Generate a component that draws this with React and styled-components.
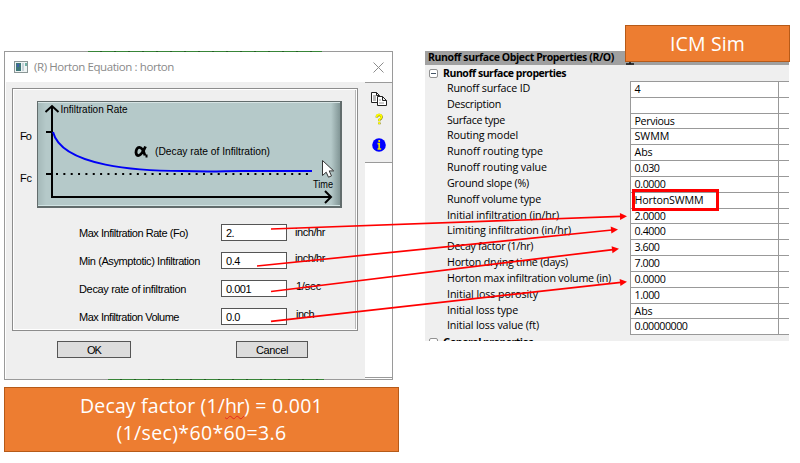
import React, { useLayoutEffect, useRef, useState } from "react";
import styled, { createGlobalStyle } from "styled-components";

const Global = createGlobalStyle`
  * { box-sizing: border-box; }
  body { margin: 0; background: #fff; color: #000; overflow: hidden; }
`;

const Page = styled.main`
  position: relative;
  display: flex;
  align-items: flex-start;
  width: 800px;
  height: 463px;
  padding: 51px 0 0 4px;
  overflow: hidden;
`;
const FitSpan = styled.span`
  display: inline-block;
  width: max-content;
  white-space: pre;
`;

/* Spreads a label's letters so that it fills the given width. */
function Fit({ width, children }) {
  const ref = useRef(null);
  const [spacing, setSpacing] = useState(0);
  useLayoutEffect(() => {
    ref.current.style.letterSpacing = "0px";
    const natural = ref.current.getBoundingClientRect().width;
    const next = (width - natural) / String(children).length;
    ref.current.style.letterSpacing = `${next}px`;
    setSpacing(next);
  }, [width, children]);
  return <FitSpan ref={ref} style={{ letterSpacing: `${spacing}px` }}>{children}</FitSpan>;
}

const LeftColumn = styled.div`
  display: flex;
  flex-direction: column;
  gap: 7px;
  width: 421px;
`;
const Dialog = styled.section`
  position: relative;
  width: 389px;
  height: 329px;
  border: 1px solid #9a9a9a;
  background: #fff;
  font: 11px/14px "Liberation Sans", Arial, sans-serif;
`;
const Trace = styled.i`
  position: absolute;
  left: ${(p) => p.$left}px;
  ${(p) => p.$edge}: -1px;
  width: ${(p) => p.$width}px;
  height: 1px;
  background: repeating-linear-gradient(90deg, #388538 0 12px, #245b24 12px 14px);
`;
const TitleBar = styled.header`
  display: flex;
  align-items: center;
  height: 30px;
  padding: 0 8px 0 9px;
  color: #8a8a8a;
  font: 11.5px/16px "Open Sans", "Noto Sans", sans-serif;
  svg:last-child { margin-left: auto; }
`;
const TitleText = styled.h1`
  margin: 0 0 0 6px;
  font: inherit;
`;
const DialogBody = styled.div`
  display: flex;
  height: 297px;
`;
const DialogMain = styled.div`
  width: 359px;
  margin-left: 1px;
  padding: 6px 0 0 6px;
  background: #efefef;
`;
const ToolRail = styled.aside`
  flex: 1;
  height: 296px;
  border-bottom: 1px solid #9a9a9a;
`;
const Tools = styled.nav`
  display: flex;
  flex-direction: column;
  align-items: center;
  height: 81px;
  padding-top: 9px;
  border: solid #9a9a9a;
  border-width: 1px 0;
  background: #efefef;
`;
const GroupBox = styled.div`
  width: 346px;
  height: 243px;
  padding: 12px 0 0 5px;
  border: 1px solid #8c8c8c;
  box-shadow: inset 1px 1px #fff, inset -1px -1px #fff, inset -2px 0 #b8b8b8;
`;
const ChartRow = styled.div`
  display: flex;
`;
const AxisNames = styled.div`
  display: flex;
  flex-direction: column;
  gap: 28px;
  width: 19px;
  padding: 28px 0 0 2px;
`;
const ChartFrame = styled.div`
  width: 305px;
  height: 107px;
  border: 1px solid #626c6c;
  border-width: 1px 2px 2px 1px;
  background: linear-gradient(90deg, #a5b9b9, #b5c9c9 8px, #b5c9c9 293px, #829696);
  box-shadow: inset 0 1px #d7e4e4, inset 0 -1px #d1e4e4;
  svg { display: block; }
`;
const Fields = styled.div`
  display: grid;
  row-gap: 11px;
  margin: 16px 0 0 61px;
`;
const FieldRow = styled.label`
  display: grid;
  grid-template-columns: 142px 66px 1fr;
  height: 17px;
  align-items: center;
`;
const FieldInput = styled.div`
  height: 17px;
  padding: 1px 0 0 4px;
  border: 1px solid #555;
  background: #fff;
`;
const Unit = styled.span`
  padding-left: ${(p) => p.$inset}px;
  transform: translateY(${(p) => -p.$raise}px);
`;
const Buttons = styled.div`
  display: flex;
  gap: 105px;
  padding: 10px 0 0 45px;
`;
const Button = styled.button`
  width: ${(p) => p.$width}px;
  height: 17px;
  padding: 0;
  border: 1px solid #555;
  background: #dcdcdc;
  color: #000;
  font: inherit;
`;
const Note = styled.div`
  width: 395px;
  height: 65px;
  padding-top: 4px;
  border: 1px solid #b65a18;
  background: #ed7d31;
  color: #fff;
  text-align: center;
  font: 500 19.5px/27px "Open Sans", "Noto Sans", sans-serif;
`;
const Spelled = styled.span`
  span {
    text-decoration: underline wavy #e52620 1px;
    text-underline-offset: 2px;
    text-decoration-skip-ink: none;
  }
`;

const Inspector = styled.section`
  width: 364px;
  height: 290px;
  overflow: hidden;
  background: #efefef;
  font: 500 10.7px/14px "Open Sans", "Noto Sans", sans-serif;
`;
const InspectorTitle = styled.header`
  height: 14px;
  padding-left: 3px;
  background: #a0a0a0;
  font-weight: 700;
  font-size: 10.5px;
  line-height: 12px;
`;
const GroupHeader = styled.div`
  display: flex;
  align-items: center;
  gap: 5px;
  height: ${(p) => p.$height}px;
  padding-left: 4px;
  font-weight: 700;
  font-size: 10.5px;
`;
const Toggle = styled.span`
  display: grid;
  place-items: center;
  width: 9px;
  height: 9px;
  border: 1px solid #919191;
  border-radius: 2px;
  background: #fff;
  &::before { content: ""; width: 5px; height: 1px; background: #456; }
`;
const PropertyRow = styled.div`
  display: grid;
  grid-template-columns: 205px 148px 1fr;
  height: 15.84px;
`;
const PropertyName = styled.div`
  padding-left: 22px;
  line-height: 15px;
  white-space: nowrap;
`;
const PropertyValue = styled.div`
  padding-left: 3.5px;
  border: solid #999;
  border-width: 1px 0 0 1px;
  background: #fff;
`;
const TableEnd = styled.div`
  height: 1px;
  margin-left: 205px;
  background: #999;
`;
const Banner = styled.div`
  position: absolute;
  left: 625px;
  top: 25px;
  width: 165px;
  height: 37px;
  border: 1px solid #b65a18;
  background: #ed7d31;
  color: #fff;
  text-align: center;
  font: 500 19.5px/35px "Open Sans", "Noto Sans", sans-serif;
`;
const Highlight = styled.div`
  position: absolute;
  left: 632px;
  top: 189px;
  width: 87px;
  height: 22px;
  border: 3px solid #f00;
`;
const Links = styled.svg`
  position: absolute;
  inset: 0;
  pointer-events: none;
`;

const fields = [
  ["Max Infiltration Rate (Fo)", 109, "2.", 8, "inch/hr", 30, 8, 1],
  ["Min (Asymptotic) Infiltration", 121, "0.4", 14, "inch/hr", 30, 8, 3],
  ["Decay rate of infiltration", 107, "0.001", 25, "1/sec", 25, 9, 3],
  ["Max Infiltration Volume", 100, "0.0", 14, "inch", 18, 9, 3],
];
const properties = [
  ["Runoff surface ID", 83, "4", 6],
  ["Description", 54, "", 0],
  ["Surface type", 58, "Pervious", 40],
  ["Routing model", 71, "SWMM", 35],
  ["Runoff routing type", 96, "Abs", 18],
  ["Runoff routing value", 100, "0.030", 25],
  ["Ground slope (%)", 82, "0.0000", 31],
  ["Runoff volume type", 94, "HortonSWMM", 69],
  ["Initial infiltration (in/hr)", 112, "2.0000", 31],
  ["Limiting infiltration (in/hr)", 124, "0.4000", 31],
  ["Decay factor (1/hr)", 86, "3.600", 25],
  ["Horton drying time (days)", 121, "7.000", 25],
  ["Horton max infiltration volume (in)", 164, "0.0000", 31],
  ["Initial loss porosity", 91, "1.000", 25],
  ["Initial loss type", 71, "Abs", 18],
  ["Initial loss value (ft)", 92, "0.00000000", 53],
];
const links = [
  [271, 229, 627, 216.2],
  [257, 266, 618, 229.4],
  [271, 291.5, 619, 248.8],
  [271, 321.3, 627, 281.7],
];

function WindowIcon() {
  return (
    <svg width="14" height="12">
      <rect x=".5" y=".5" width="13" height="11" fill="#eef4f4" stroke="#8b9696" />
      <path d="M2 2h5v8H2z" fill="#3e7778" /><path d="M3 3h2v3H3z" fill="#3f63a8" />
      <path d="M8 2h2v8H8z" fill="#c6d2d8" /><path d="M11 2h2v3h-2z" fill="#6fb0a4" />
    </svg>
  );
}

function ToolIcons() {
  return (
    <svg width="18" height="62">
      <g stroke="#222" fill="#fff">
        <path d="M1.500 .5h5l3 3v7h-8zM6.500 .5v3h3" />
        <path d="M3 4h3M3 6h3M3 8h3" stroke="#777" />
        <path d="M7.500 4.500h5l4 4v5h-9zM12.500 4.500v4h4" />
        <path d="M9 8h2M9 11h5" stroke="#999" />
      </g>
      <path d="M6.800 25.500q0-2.500 2.400-2.500t2.400 2.200q0 1.300-2.200 2.500v1.600M9.400 30.500v1.700" fill="none" stroke="#8a8600" strokeWidth="2.400" />
      <path d="M6.600 25.200q0-2.500 2.400-2.500t2.400 2.200q0 1.300-2.200 2.500v1.500M9.200 30.200v1.700" fill="none" stroke="#ff0" strokeWidth="1.700" />
      <circle cx="9" cy="53" r="6.800" fill="#00f" />
      <path d="M9.200 48v2M7.500 51.700h1.700v5M7.500 57h3.700" fill="none" stroke="#e8e000" strokeWidth="1.700" />
    </svg>
  );
}

function DecayChart() {
  return (
    <svg width="302" height="104" fontFamily="Liberation Sans, Arial, sans-serif" fontSize="11">
      <g fill="none" stroke="#000" strokeWidth="2">
        <path d="M14 4v91H293" /><path d="M7.500 10l6.500-6 6.500 6M287 89l6 6-6 6" />
        <path d="M8 30h7M8 72h7" />
        <path d="M18 72H275" strokeDasharray="2 5.350" />
      </g>
      <path d="M15 30C24 65 103 69 144 69C177 70 184 69 204 69H274" fill="none" stroke="#0000f5" strokeWidth="2" />
      <text x="22.500" y="11" textLength="67" lengthAdjust="spacingAndGlyphs">Infiltration Rate</text>
      <text x="117" y="53" textLength="115" lengthAdjust="spacingAndGlyphs">(Decay rate of Infiltration)</text>
      <text x="275" y="86" textLength="20" lengthAdjust="spacingAndGlyphs">Time</text>
      <path d="M107.500 44.500C103 55 98.500 55.500 98 50.500C98 44 104 42.500 107 53.500M107.500 54h2" fill="none" stroke="#000" strokeWidth="2.800" />
      <path d="M284.500 58.500v15l3.700-3.300 2.300 5 3-1.300-2.300-5h4.500z" fill="#fff" stroke="#333" />
    </svg>
  );
}

export default function App() {
  return (
    <Page>
      <Global />
      <LeftColumn>
        <Dialog>
          <Trace $left={83} $width={234} $edge="top" />
          <Trace $left={103} $width={216} $edge="bottom" />
          <TitleBar>
            <WindowIcon />
            <TitleText><Fit width={140}>(R) Horton Equation : horton</Fit></TitleText>
            <svg width="11" height="11"><path d="M.5.5l10 10M10.500.5l-10 10" stroke="#8c8c8c" /></svg>
          </TitleBar>
          <DialogBody>
            <DialogMain>
              <GroupBox>
                <ChartRow>
                  <AxisNames><Fit width={11}>Fo</Fit><Fit width={12}>Fc</Fit></AxisNames>
                  <ChartFrame><DecayChart /></ChartFrame>
                </ChartRow>
                <Fields>
                  {fields.map(([name, nw, value, vw, unit, uw, inset, raise]) => (
                    <FieldRow key={name}>
                      <Fit width={nw}>{name}</Fit>
                      <FieldInput><Fit width={vw}>{value}</Fit></FieldInput>
                      <Unit $inset={inset} $raise={raise}><Fit width={uw}>{unit}</Fit></Unit>
                    </FieldRow>
                  ))}
                </Fields>
              </GroupBox>
              <Buttons>
                <Button $width={74}><Fit width={14}>OK</Fit></Button>
                <Button $width={72}><Fit width={32}>Cancel</Fit></Button>
              </Buttons>
            </DialogMain>
            <ToolRail><Tools><ToolIcons /></Tools></ToolRail>
          </DialogBody>
        </Dialog>
        <Note>
          <div>
            <Fit width={145}>{"Decay factor (1/"}</Fit>
            <Spelled><Fit width={19}>hr</Fit></Spelled>
            <Fit width={79}>{") = 0.001"}</Fit>
          </div>
          <div><Fit width={170}>(1/sec)*60*60=3.6</Fit></div>
        </Note>
      </LeftColumn>
      <Inspector>
        <InspectorTitle><Fit width={186}>Runoff surface Object Properties (R/O)</Fit></InspectorTitle>
        <GroupHeader $height={16}><Toggle /><Fit width={123}>Runoff surface properties</Fit></GroupHeader>
        {properties.map(([name, nw, value, vw]) => (
          <PropertyRow key={name}>
            <PropertyName><Fit width={nw}>{name}</Fit></PropertyName>
            <PropertyValue>{value && <Fit width={vw}>{value}</Fit>}</PropertyValue>
            <PropertyValue />
          </PropertyRow>
        ))}
        <TableEnd />
        <GroupHeader $height={14}><Toggle /><Fit width={90}>General properties</Fit></GroupHeader>
      </Inspector>
      <Banner><Fit width={75}>ICM Sim</Fit></Banner>
      <Highlight />
      <Links width="800" height="463">
        <path d="M626 64h8M630 62v2" stroke="#111" strokeWidth="1.500" />
        {links.map(([x1, y1, x2, y2]) => (
          <g key={y1}>
            <line x1={x1} y1={y1} x2={x2 - 6} y2={y2 + (y1 - y2) * 6 / (x2 - x1)} stroke="#f00" strokeWidth="1.700" />
            <path
              d="M0 0L-7-3.500V3.500Z"
              fill="#f00"
              transform={`translate(${x2} ${y2}) rotate(${Math.atan2(y2 - y1, x2 - x1) * 180 / Math.PI})`}
            />
          </g>
        ))}
      </Links>
    </Page>
  );
}
